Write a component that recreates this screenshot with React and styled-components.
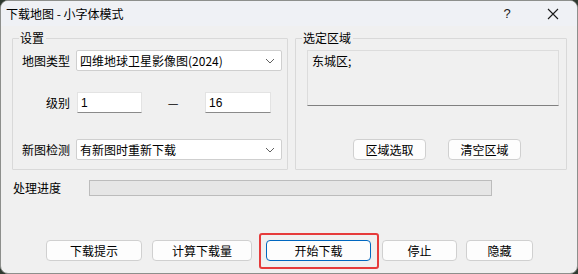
import styled, { createGlobalStyle } from "styled-components";

const Global = createGlobalStyle`
  html, body {
    margin: 0;
    padding: 0;
    background: #2f3a30;
  }
  body {
    font-family: "Microsoft YaHei UI", "Noto Sans CJK SC", "Noto Sans", sans-serif;
    font-size: 12px;
    color: #000;
  }
`;

const Chevron = () => (
  <svg width="10" height="6" viewBox="0 0 10 6">
    <path d="M1 1 L5 5 L9 1" fill="none" stroke="#606060" strokeWidth="1" />
  </svg>
);

const App = () => {
  return (
    <>
      <Global />
      <Window>
        <TitleBar>
          <Title>下载地图 - 小字体模式</Title>
          <TitleBtn>?</TitleBtn>
          <CloseBtn>
            <svg width="12" height="12" viewBox="0 0 12 12">
              <path d="M1 1 L11 11 M11 1 L1 11" stroke="#1a1a1a" strokeWidth="1.1" />
            </svg>
          </CloseBtn>
        </TitleBar>
        <Body>
          <Groups>
            <Group $w={276}>
              <Legend>设置</Legend>
              <GroupInner>
                <Row $mt={5}>
                  <Label>地图类型</Label>
                  <Combo $w={206}>
                    <span>四维地球卫星影像图(2024)</span>
                    <Chevron />
                  </Combo>
                </Row>
                <Row $mt={21}>
                  <Label>级别</Label>
                  <Edit $w={65}>1</Edit>
                  <Dash>—</Dash>
                  <Edit $w={66}>16</Edit>
                </Row>
                <Row $mt={26}>
                  <Label>新图检测</Label>
                  <Combo $w={206}>
                    <span>有新图时重新下载</span>
                    <Chevron />
                  </Combo>
                </Row>
              </GroupInner>
            </Group>
            <Group $w={272}>
              <Legend>选定区域</Legend>
              <RightInner>
                <ListBox>东城区;</ListBox>
                <AreaButtons>
                  <Button $w={73}>区域选取</Button>
                  <Button $w={73}>清空区域</Button>
                </AreaButtons>
              </RightInner>
            </Group>
          </Groups>
          <ProgressRow>
            <ProgressLabel>处理进度</ProgressLabel>
            <ProgressBar />
          </ProgressRow>
          <Footer>
            <Button $w={96}>下载提示</Button>
            <Button $w={100} $ml={10}>计算下载量</Button>
            <Highlight $ml={14}>
              <Button $w={105} $primary>开始下载</Button>
            </Highlight>
            <Button $w={75} $ml={11}>停止</Button>
            <Button $w={67} $ml={9}>隐藏</Button>
          </Footer>
        </Body>
      </Window>
    </>
  );
};

const Window = styled.div`
  width: 578px;
  height: 274px;
  box-sizing: border-box;
  border: 1px solid #8d8f8c;
  border-radius: 8px;
  overflow: hidden;
  background: #f0f0f0;
  display: flex;
  flex-direction: column;
`;

const TitleBar = styled.div`
  height: 25px;
  background: #eff1f5;
  display: flex;
  align-items: center;
  padding-left: 5px;
`;

const Title = styled.div`
  flex: 1;
  font-size: 12px;
  line-height: 14px;
`;

const TitleBtn = styled.div`
  width: 14px;
  text-align: center;
  font-family: "Liberation Sans", sans-serif;
  font-size: 13px;
  margin-right: 33px;
  color: #1a1a1a;
`;

const CloseBtn = styled.div`
  width: 12px;
  height: 12px;
  display: flex;
  margin-right: 18px;
`;

const Body = styled.div`
  flex: 1;
  padding: 5px 0 0 11px;
  display: flex;
  flex-direction: column;
`;

const Groups = styled.div`
  display: flex;
  gap: 7px;
`;

const Group = styled.fieldset`
  width: ${(p) => p.$w}px;
  height: 139px;
  box-sizing: border-box;
  margin: 0;
  padding: 0;
  border: 1px solid #d9d9d9;
  border-radius: 1px;
  min-width: 0;
`;

const Legend = styled.legend`
  margin-left: 6px;
  padding: 0 2px 0 1px;
  font-size: 12px;
  line-height: 14px;
`;

const GroupInner = styled.div`
  display: flex;
  flex-direction: column;
  padding-left: 7px;
`;

const Row = styled.div`
  display: flex;
  align-items: center;
  margin-top: ${(p) => p.$mt}px;
  height: 21px;
`;

const Label = styled.div`
  width: 50px;
  text-align: right;
  margin-right: 6px;
  line-height: 14px;
`;

const Combo = styled.div`
  width: ${(p) => p.$w}px;
  height: 21px;
  box-sizing: border-box;
  background: #fff;
  border: 1px solid #cfcfcf;
  border-radius: 2px;
  display: flex;
  align-items: center;
  justify-content: space-between;
  padding: 0 6px 0 3px;
  line-height: 14px;
`;

const Edit = styled.div`
  width: ${(p) => p.$w}px;
  height: 21px;
  box-sizing: border-box;
  background: #fff;
  border: 1px solid #e3e3e3;
  border-bottom-color: #8a8a8a;
  padding-left: 3px;
  display: flex;
  align-items: center;
  font-family: "Liberation Sans", sans-serif;
  font-size: 12px;
  margin-left: 1px;
`;

const Dash = styled.div`
  width: 62px;
  text-align: center;
`;

const RightInner = styled.div`
  display: flex;
  flex-direction: column;
  padding: 5px 0 0 11px;
`;

const ListBox = styled.div`
  width: 252px;
  height: 56px;
  box-sizing: border-box;
  background: #f0f0f0;
  border: 1px solid #dcdcdc;
  border-bottom-color: #808080;
  padding: 3px 0 0 4px;
  line-height: 14px;
`;

const AreaButtons = styled.div`
  display: flex;
  gap: 22px;
  margin-top: 33px;
  padding-left: 46px;
`;

const Button = styled.div`
  width: ${(p) => p.$w}px;
  margin-left: ${(p) => p.$ml || 0}px;
  height: 21px;
  box-sizing: border-box;
  background: #fdfdfd;
  border: 1px solid ${(p) => (p.$primary ? "#0067c0" : "#d0d0d0")};
  border-radius: 4px;
  display: flex;
  align-items: center;
  justify-content: center;
  line-height: 14px;
`;

const ProgressRow = styled.div`
  display: flex;
  align-items: center;
  margin-top: 10px;
  height: 16px;
`;

const ProgressLabel = styled.div`
  width: 76px;
  padding-left: 1px;
  line-height: 14px;
`;

const ProgressBar = styled.div`
  width: 403px;
  height: 16px;
  box-sizing: border-box;
  background: #e6e6e6;
  border: 1px solid #bcbcbc;
`;

const Footer = styled.div`
  display: flex;
  margin-top: 44px;
  padding-left: 34px;
`;

const Highlight = styled.div`
  position: relative;
  margin-left: ${(p) => p.$ml}px;
  &::after {
    content: "";
    position: absolute;
    left: -7px;
    right: -8px;
    top: -7px;
    bottom: -8px;
    border: 2px solid #e63b3b;
    border-radius: 3px;
  }
`;

export default App;
